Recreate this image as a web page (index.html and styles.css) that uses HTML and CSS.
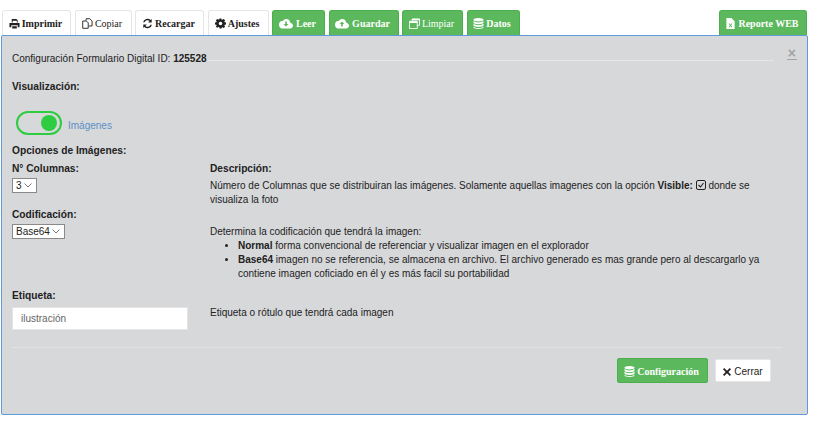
FILE: index.html
```html
<!DOCTYPE html>
<html lang="es">
<head>
<meta charset="utf-8">
<title>Configuración Formulario Digital</title>
<link rel="stylesheet" href="styles.css">
</head>
<body>
<svg class="defs" width="0" height="0" aria-hidden="true">
  <symbol id="i-db" viewBox="0 0 12 12"><path d="M6 0C3 0 .5.8.5 1.9S3 3.8 6 3.8s5.500-.8 5.500-1.900S9 0 6 0zM.5 3.300V5c0 1.100 2.500 1.900 5.500 1.900s5.500-.8 5.500-1.900V3.300C10.500 4.300 8.300 4.800 6 4.800S1.500 4.300.5 3.300zm0 3.100V8c0 1.100 2.500 1.900 5.500 1.900s5.500-.8 5.500-1.900V6.400C10.500 7.400 8.300 7.900 6 7.900S1.500 7.400.5 6.400zm0 3.100V10.100C.5 11.200 3 12 6 12s5.500-.8 5.500-1.900V9.500C10.500 10.500 8.300 11 6 11S1.500 10.500.5 9.500z"/></symbol>
  <symbol id="i-cloud" viewBox="0 0 14 11"><path d="M11.300 4.700C11.100 2.600 9.400 1 7.300 1 5.800 1 4.500 1.800 3.800 3 3.500 2.900 3.300 2.900 3 2.900 1.300 2.900 0 4.300 0 6.800 0 9 1.400 10.500 3.200 10.500h8C12.800 10.500 14 9.200 14 7.600c0-1.400-1.100-2.600-2.700-2.900z"/></symbol>
</svg>
<nav class="toolbar">
  <button class="tab w-imprimir"><svg class="ic" viewBox="0 0 12 12"><path d="M3 1h5l1.500 1.500V5H8.500V3H4v2H3zM.5 5.500h11V10H9.500V8h-7v2H.5zM3.500 9h5v2.500h-5z"/></svg>Imprimir</button>
  <button class="tab tab-plain w-copiar"><svg class="ic" viewBox="0 0 12 12"><path fill="none" stroke="currentColor" d="M4.500 3V.8h4l2.500 2.500v5.400H7.500M.8 3.300h4l2 2v5.900H.8z"/></svg>Copiar</button>
  <button class="tab w-recargar"><svg class="ic" viewBox="0 0 12 12"><path d="M10.600 1v3.800H6.800l1.400-1.400A3.300 3.300 0 0 0 2.800 4.700H1.200A4.900 4.900 0 0 1 9.400 2.200zM1.400 11V7.200h3.800L3.800 8.600A3.300 3.300 0 0 0 9.200 7.300h1.600A4.900 4.900 0 0 1 2.600 9.800z"/></svg>Recargar</button>
  <button class="tab w-ajustes"><svg class="ic" viewBox="0 0 12 12"><path fill-rule="evenodd" d="M5 .5h2l.3 1.600 1-.4L9.600 1l1.400 1.400-.8 1.300.5 1 1.300.3v2l-1.300.3-.5 1 .8 1.300L9.600 11l-1.300-.8-1 .5L7 11.500H5l-.3-1.300-1-.5-1.300.8L1 9.600l.8-1.300-.5-1L0 7V5l1.300-.3.500-1L1 2.400 2.400 1l1.300.7 1-.4zM6 4a2 2 0 1 0 0 4 2 2 0 0 0 0-4z"/></svg>Ajustes</button>
  <button class="tab tab-green w-leer"><svg class="ic ic-w" viewBox="0 0 14 11"><use href="#i-cloud"/><path class="cut" d="M6.200 3.500h1.600v2.500h1.700L7 8.600 4.500 6h1.700z"/></svg>Leer</button>
  <button class="tab tab-green w-guardar"><svg class="ic ic-w" viewBox="0 0 14 11"><use href="#i-cloud"/><path class="cut" d="M6.200 8.600h1.600V6h1.700L7 3.400 4.500 6h1.700z"/></svg>Guardar</button>
  <button class="tab tab-green tab-plain w-limpiar"><svg class="ic" viewBox="0 0 12 12"><path fill="none" stroke="currentColor" d="M3.500 3V1h8v7H9M.5 3.500h8.500v8H.5z"/><path d="M.5 3.500h8.500v2H.5zM3.500 1h8v1.500h-8z"/></svg>Limpiar</button>
  <button class="tab tab-green w-datos"><svg class="ic" viewBox="0 0 12 12"><use href="#i-db"/></svg>Datos</button>
  <button class="tab tab-green tab-end"><svg class="ic" viewBox="0 0 10 12"><path d="M.5 0H6l3.500 3.500V12H.5z"/><path class="cut" d="M3 6h1.200L5 7.300 5.800 6H7L5.700 8 7 10H5.800L5 8.700 4.200 10H3l1.300-2z"/></svg>Reporte WEB</button>
</nav>
<main class="panel">
  <header class="title-row">
    <span class="title-text">Configuración Formulario Digital ID: <b>125528</b></span>
    <span class="title-line"></span>
    <span class="close">×</span>
  </header>
  <h2 class="label label-vis">Visualización:</h2>
  <div class="toggle-row">
    <span class="toggle"><span class="knob"></span></span>
    <span class="toggle-text">Imágenes</span>
  </div>
  <h2 class="label label-opt">Opciones de Imágenes:</h2>
  <div class="grid">
    <section class="field">
      <h3 class="label">N° Columnas:</h3>
      <select class="sel sel-num"><option>3</option></select>
    </section>
    <section class="desc">
      <h3 class="label">Descripción:</h3>
      <p class="text">Número de Columnas que se distribuiran las imágenes. Solamente aquellas imagenes con la opción <b>Visible:</b> <svg class="check" viewBox="0 0 10 10"><rect x=".5" y=".5" width="9" height="9" rx="1.500" fill="none" stroke="#222"/><path d="M2.500 5l2 2 3-4" fill="none" stroke="#222" stroke-width="1.100"/></svg> donde se visualiza la foto</p>
    </section>
    <section class="field">
      <h3 class="label">Codificación:</h3>
      <select class="sel sel-cod"><option>Base64</option></select>
    </section>
    <section class="desc desc-low">
      <p class="text">Determina la codificación que tendrá la imagen:</p>
      <ul class="list">
        <li><b>Normal</b> forma convencional de referenciar y visualizar imagen en el explorador</li>
        <li><b>Base64</b> imagen no se referencia, se almacena en archivo. El archivo generado es mas grande pero al descargarlo ya contiene imagen coficiado en él y es más facil su portabilidad</li>
      </ul>
    </section>
    <section class="field">
      <h3 class="label">Etiqueta:</h3>
      <input class="input" type="text" value="ilustración">
    </section>
    <section class="desc desc-low">
      <p class="text">Etiqueta o rótulo que tendrá cada imagen</p>
    </section>
  </div>
  <hr class="sep">
  <footer class="actions">
    <button class="btn btn-green"><svg class="ic" viewBox="0 0 12 12"><use href="#i-db"/></svg>Configuración</button>
    <button class="btn btn-white"><svg class="ic ic-x" viewBox="0 0 10 10"><path d="M1.500 0L5 3.300 8.500 0 10 1.500 6.700 5 10 8.500 8.500 10 5 6.700 1.500 10 0 8.500 3.300 5 0 1.500z"/></svg>Cerrar</button>
  </footer>
</main>
</body>
</html>
```
FILE: styles.css
```css
* { box-sizing: border-box; }
html, body { margin: 0; padding: 0; }
body {
  width: 815px;
  height: 426px;
  background: #fff;
  color: #222;
  font: 10px/14px "Liberation Sans", Arial, sans-serif;
  overflow: hidden;
}
.defs { position: absolute; }
.toolbar {
  display: flex;
  gap: 3.500px;
  height: 35px;
  padding: 10px 8px 0 2px;
}
.tab {
  display: flex;
  align-items: center;
  justify-content: center;
  height: 25px;
  padding: 0 2px 0 0;
  background: #fff;
  border: 1px solid #e6e6e6;
  border-bottom: 0;
  border-radius: 3px 3px 0 0;
  color: #222;
  font: bold 10px "Liberation Serif", serif;
  white-space: nowrap;
}
.tab-plain { font-weight: normal; }
.tab-green {
  background: #5cb85c;
  border: 1px solid #4cae4c;
  border-bottom: 0;
  color: #fff;
}
.tab-end { margin-left: auto; width: 88px; }
.w-imprimir { width: 69px; }
.w-copiar { width: 57px; }
.w-recargar { width: 69px; }
.w-ajustes { width: 61px; }
.w-leer { width: 53px; }
.w-guardar { width: 70px; }
.w-limpiar { width: 61px; }
.w-datos { width: 53px; }
.ic {
  width: 11px;
  height: 11px;
  margin-right: 2px;
  fill: currentColor;
  flex: none;
}
.ic-w { width: 14px; margin-right: 3px; }
.cut { fill: #5cb85c; }
.panel {
  height: 380px;
  margin: 0 7px 0 1px;
  padding: 0 10px;
  background: #d7d8da;
  border: 1px solid #5f9bdb;
  border-radius: 2px;
}
.title-row {
  display: flex;
  align-items: center;
  height: 14px;
  margin-top: 16px;
}
.title-text { white-space: nowrap; }
.title-line {
  width: 566px;
  height: 1px;
  margin: 2px 0 0 1px;
  background: #e6e6e6;
}
.close {
  align-self: flex-start;
  height: 12px;
  margin: -4px 0 0 auto;
  padding: 0 1px;
  color: #a3a3a3;
  font: bold 14px/11px "Liberation Sans", sans-serif;
  border-bottom: 1px solid #a3a3a3;
}
.label {
  margin: 0;
  font: bold 10.200px/14px "Liberation Sans", sans-serif;
}
.label-vis { margin-top: 14px; }
.toggle-row {
  display: flex;
  align-items: center;
  gap: 6px;
  height: 24px;
  margin: 17px 0 0 4px;
}
.toggle {
  display: flex;
  align-items: center;
  justify-content: flex-end;
  width: 46px;
  height: 24px;
  padding-right: 3px;
  border: 2px solid #2ecc40;
  border-radius: 12px;
  background: #d7d8da;
}
.knob {
  width: 16px;
  height: 16px;
  border-radius: 50%;
  background: #2ecc40;
}
.toggle-text { color: #5b8fc7; margin-top: 6px; }
.label-opt { margin-top: 9px; }
.grid {
  display: grid;
  grid-template-columns: 176px 1fr;
  grid-template-rows: 46px 81px auto;
  column-gap: 22px;
  width: 770px;
  margin-top: 4px;
}
.field, .desc { min-width: 0; }
.sel {
  display: block;
  height: 15px;
  margin-top: 2px;
  padding: 0 0 0 3px;
  appearance: none;
  background: #fff url("data:image/svg+xml,%3Csvg xmlns='http://www.w3.org/2000/svg' width='8' height='5'%3E%3Cpath d='M.5.500L4 4 7.500.5' fill='none' stroke='%23777'/%3E%3C/svg%3E") no-repeat right 4px center;
  border: 1px solid #8a8a8a;
  border-radius: 0;
  color: #222;
  font: 10px "Liberation Sans", sans-serif;
}
.sel-num { width: 25px; }
.sel-cod { width: 53px; }
.text { margin: 3px 0 0; }
.check {
  width: 10px;
  height: 10px;
  vertical-align: -1px;
}
.desc-low { padding-top: 17px; }
.desc-low .text { margin-top: 0; }
.list {
  margin: 0;
  padding-left: 28px;
}
.input {
  display: block;
  width: 176px;
  height: 23px;
  margin-top: 4px;
  padding: 0 8px;
  background: #fff;
  border: 1px solid #e4e4e4;
  color: #666;
  font: 10px "Liberation Sans", sans-serif;
}
.sep {
  width: 770px;
  height: 1px;
  margin: 17px 0 0;
  border: 0;
  background: #e2e2e3;
}
.actions {
  display: flex;
  align-items: center;
  justify-content: flex-end;
  gap: 7px;
  width: 759px;
  margin-top: 10px;
}
.btn {
  display: flex;
  align-items: center;
  justify-content: center;
  padding: 2px 0 0;
  border-radius: 2px;
  white-space: nowrap;
}
.btn-green {
  width: 91px;
  height: 25px;
  padding-right: 2px;
  background: #5cb85c;
  border: 1px solid #4cae4c;
  color: #fff;
  font: bold 10px "Liberation Serif", serif;
}
.btn-white {
  width: 56px;
  height: 23px;
  background: #fff;
  border: 1px solid #e6e6e6;
  color: #222;
  font: 10px "Liberation Sans", sans-serif;
}
.ic-x { width: 8px; height: 8px; margin-right: 3px; }
```
